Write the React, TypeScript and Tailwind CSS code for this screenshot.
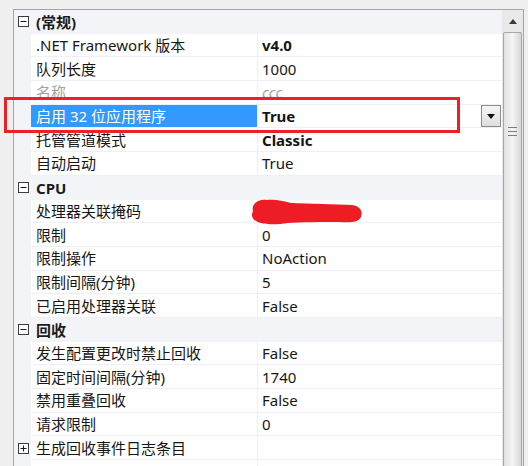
import React from 'react'

type Row =
  | { kind: 'group'; label: string }
  | {
      kind: 'prop'
      name: string
      value?: string
      bold?: boolean
      dim?: boolean
      selected?: boolean
      expand?: boolean
      masked?: boolean
    }

const rows: Row[] = [
  { kind: 'group', label: '(常规)' },
  { kind: 'prop', name: '.NET Framework 版本', value: 'v4.0', bold: true },
  { kind: 'prop', name: '队列长度', value: '1000' },
  { kind: 'prop', name: '名称', value: 'ccc', dim: true },
  { kind: 'prop', name: '启用 32 位应用程序', value: 'True', bold: true, selected: true },
  { kind: 'prop', name: '托管管道模式', value: 'Classic', bold: true },
  { kind: 'prop', name: '自动启动', value: 'True' },
  { kind: 'group', label: 'CPU' },
  { kind: 'prop', name: '处理器关联掩码', masked: true },
  { kind: 'prop', name: '限制', value: '0' },
  { kind: 'prop', name: '限制操作', value: 'NoAction' },
  { kind: 'prop', name: '限制间隔(分钟)', value: '5' },
  { kind: 'prop', name: '已启用处理器关联', value: 'False' },
  { kind: 'group', label: '回收' },
  { kind: 'prop', name: '发生配置更改时禁止回收', value: 'False' },
  { kind: 'prop', name: '固定时间间隔(分钟)', value: '1740' },
  { kind: 'prop', name: '禁用重叠回收', value: 'False' },
  { kind: 'prop', name: '请求限制', value: '0' },
  { kind: 'prop', name: '生成回收事件日志条目', expand: true },
  { kind: 'prop', name: '' },
]

function ToggleBox({ open }: { open: boolean }) {
  return (
    <svg width="11" height="11" viewBox="0 0 11 11" className="block">
      <rect x="0.5" y="0.5" width="10" height="10" fill="#fff" stroke="#3c3c3c" />
      <line x1="2.5" y1="5.5" x2="8.5" y2="5.5" stroke="#1a1a1a" />
      {!open && <line x1="5.5" y1="2.5" x2="5.5" y2="8.5" stroke="#1a1a1a" />}
    </svg>
  )
}

function GroupRow({ label }: { label: string }) {
  return (
    <div className="flex h-[23.7px] items-center bg-[#f2f4f8]">
      <div className="flex w-[17px] justify-center pl-[1px]">
        <ToggleBox open />
      </div>
      <span className="pl-[5px] pt-px font-bold text-[#1b1b1b]">{label}</span>
    </div>
  )
}

function PropRow({ row }: { row: Extract<Row, { kind: 'prop' }> }) {
  return (
    <div className="flex h-[23.7px]">
      <div className="flex w-[17px] items-center justify-center bg-[#f2f4f8] pl-[1px]">
        {row.expand && <ToggleBox open={false} />}
      </div>
      <div
        className={`flex w-[227px] items-center border-b border-r border-[#edf0f6] pl-[5px] pt-px ${
          row.selected ? 'bg-[#3399ff] text-white' : row.dim ? 'bg-white text-[#a3a3a3]' : 'bg-white text-[#161616]'
        }`}
      >
        <span className="whitespace-nowrap">{row.name}</span>
      </div>
      <div className="flex flex-1 items-center border-b border-[#edf0f6] bg-white pl-[4px]">
        <span
          className={`whitespace-nowrap pt-px ${row.bold ? 'font-bold' : ''} ${
            row.dim ? 'italic text-[#a3a3a3]' : 'text-[#161616]'
          }`}
        >
          {row.value}
        </span>
        {row.selected && (
          <div className="ml-auto mr-[1px] flex h-[22px] w-[20px] items-center justify-center border border-[#8c8c8c] bg-gradient-to-b from-[#f6f6f6] to-[#dedede]">
            <svg width="8" height="5" viewBox="0 0 8 5">
              <path d="M0 0h8L4 5z" fill="#111" />
            </svg>
          </div>
        )}
      </div>
    </div>
  )
}

function ScrollBar() {
  return (
    <div className="flex w-[21px] flex-col bg-[#e9e9e9] pl-[1px]">
      <div className="flex h-[22px] items-center justify-center">
        <svg width="8" height="5" viewBox="0 0 8 5">
          <path d="M4 0l4 5H0z" fill="#3a3a3a" />
        </svg>
      </div>
      <div className="mr-[1px] flex flex-1 flex-col items-center rounded-t-[2px] border border-b-0 border-[#a7a7a7] bg-gradient-to-r from-[#e2e2e2] via-[#f5f5f5] to-[#d6d6d6]">
        <div className="mt-[94px] flex flex-col gap-[3px]">
          <div className="h-px w-[9px] bg-[#7d7d7d]" />
          <div className="h-px w-[9px] bg-[#7d7d7d]" />
          <div className="h-px w-[9px] bg-[#7d7d7d]" />
        </div>
      </div>
    </div>
  )
}

export default function App() {
  return (
    <div
      className="relative h-[466px] w-[528px] overflow-hidden bg-[#f0f0f0] pl-[13px] pt-[9px] text-[15px] leading-none"
      style={{ fontFamily: '"Noto Sans", "Noto Sans CJK SC", sans-serif' }}
    >
      <div className="flex h-full w-[511px] border-l border-r border-t border-[#a5a5a5] bg-white">
        <div className="flex-1 overflow-hidden">
          {rows.map((row, i) =>
            row.kind === 'group' ? <GroupRow key={i} label={row.label} /> : <PropRow key={i} row={row} />
          )}
        </div>
        <ScrollBar />
      </div>

      {/* red highlight box */}
      <div className="absolute left-[4px] top-[97px] h-[36px] w-[456px] border-[3px] border-[#e8212b]" />

      {/* masked value */}
      <svg className="absolute left-[250px] top-[199px]" width="113" height="26" viewBox="0 0 113 26">
        <path
          d="M3 12 C1 5 8 0 17 1 C25 0 33 2 41 4 C60 5 85 5 102 6 C110 7 113 12 111 18 C109 23 100 24 90 23 C70 23 50 23 38 24 C26 26 12 26 6 22 C2 20 1 16 3 12 Z"
          fill="#ee1c25"
        />
      </svg>
    </div>
  )
}
